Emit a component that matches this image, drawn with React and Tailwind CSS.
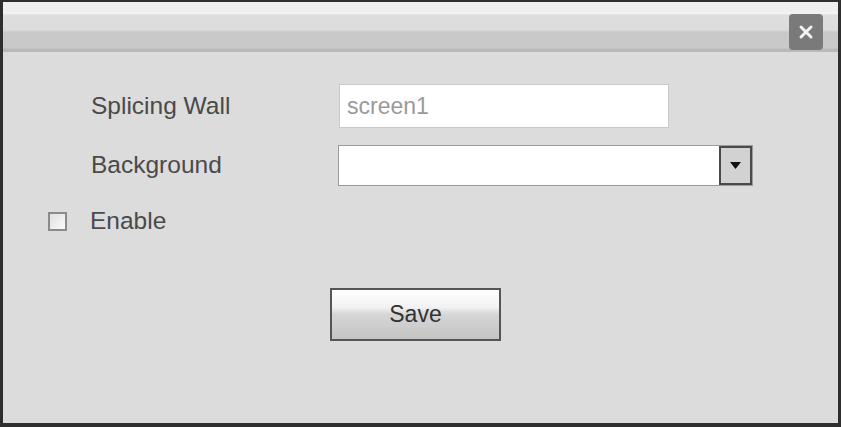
export default function App() {
  return (
    <div className="w-[841px] h-[427px] bg-[#2e2e2e] pl-[3px] pr-[3px] pt-[2px] pb-[4px] font-['Liberation_Sans',Arial,sans-serif]">
      <div className="h-full flex flex-col bg-[#dcdcdc]">
        {/* title bar */}
        <div className="h-[50px] flex items-start justify-end pr-[15px] bg-[linear-gradient(to_bottom,#efefef_0px,#efefef_10px,#f8f8f8_11px,#dedede_13px,#dcdcdc_28px,#c9c9c9_30px,#c9c9c9_46px,#b9b9b9_47px,#b9b9b9_50px)]">
          <button className="w-[34px] h-[36px] mt-[12px] rounded-[4px] bg-[#7a7a7a] flex items-center justify-center">
            <svg width="16" height="16" viewBox="0 0 16 16">
              <path d="M3 3L13 13M13 3L3 13" stroke="#f4f4f4" strokeWidth="3" strokeLinecap="round" />
            </svg>
          </button>
        </div>

        {/* form */}
        <div className="flex flex-col pl-[85px] pt-[32px]">
          <div className="flex items-center h-[44px]">
            <span className="w-[251px] pl-[3px] text-[24.5px] leading-none text-[#4a4a4a]">Splicing Wall</span>
            <div className="w-[330px] h-[44px] bg-white border border-[#c8c8c8] flex items-center pl-[7px] text-[23px] leading-none text-[#9a9a9a]">
              screen1
            </div>
          </div>
          <div className="flex items-center h-[41px] mt-[17px]">
            <span className="w-[250px] pl-[3px] text-[24.5px] leading-none text-[#4a4a4a]">Background</span>
            <div className="w-[415px] h-[41px] bg-white border border-[#9a9a9a] flex justify-end">
              <div className="w-[33px] h-full border-2 border-[#4a4a4a] bg-[#d2d2d2] flex items-center justify-center">
                <svg width="11" height="7" viewBox="0 0 11 7">
                  <path d="M0 0H11L5.5 7Z" fill="#111" />
                </svg>
              </div>
            </div>
          </div>
        </div>

        <div className="flex items-center pl-[45px] mt-[23px]">
          <div className="w-[19px] h-[19px] border-2 border-[#8a8a8a] bg-[linear-gradient(135deg,#e0e0e0,#fafafa)]" />
          <span className="ml-[23px] text-[24.5px] leading-none text-[#4a4a4a]">Enable</span>
        </div>

        <div className="flex pl-[327px] mt-[54px]">
          <button className="w-[171px] h-[53px] border-2 border-[#555] bg-[linear-gradient(to_bottom,#ffffff_0%,#f2f2f2_35%,#d6d6d6_50%,#c4c4c4_100%)] text-[23px] text-[#333]">
            Save
          </button>
        </div>
      </div>
    </div>
  );
}
